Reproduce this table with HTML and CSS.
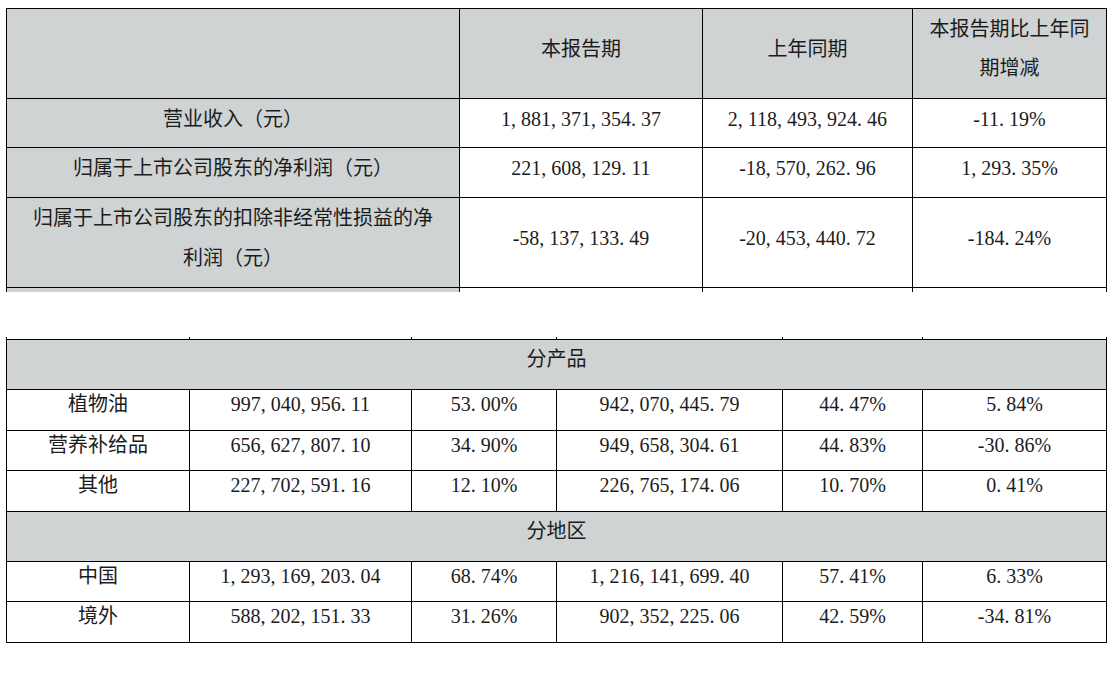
FILE: index.html
```html
<!DOCTYPE html>
<html lang="zh-CN">
<head>
<meta charset="utf-8">
<title>主要会计数据</title>
<link rel="stylesheet" href="styles.css">
</head>
<body>
<div class="page">
  <table class="kpi">
    <colgroup>
      <col class="k1"><col class="k2"><col class="k3"><col class="k4">
    </colgroup>
    <tr class="head">
      <td class="label"></td>
      <td>本报告期</td>
      <td>上年同期</td>
      <td class="narrow">本报告期比上年同期增减</td>
    </tr>
    <tr class="r49">
      <td class="label">营业收入（元）</td>
      <td>1, 881, 371, 354. 37</td>
      <td>2, 118, 493, 924. 46</td>
      <td>-11. 19%</td>
    </tr>
    <tr class="r50">
      <td class="label">归属于上市公司股东的净利润（元）</td>
      <td>221, 608, 129. 11</td>
      <td>-18, 570, 262. 96</td>
      <td>1, 293. 35%</td>
    </tr>
    <tr class="r90">
      <td class="label">归属于上市公司股东的扣除非经常性损益的净利润（元）</td>
      <td>-58, 137, 133. 49</td>
      <td>-20, 453, 440. 72</td>
      <td>-184. 24%</td>
    </tr>
    <tr class="tail">
      <td class="label"></td><td></td><td></td><td></td>
    </tr>
  </table>

  <table class="seg">
    <colgroup>
      <col class="s1"><col class="s2"><col class="s3"><col class="s4"><col class="s5"><col class="s6">
    </colgroup>
    <tr class="lead">
      <td></td><td></td><td></td><td></td><td></td><td></td>
    </tr>
    <tr class="sec first">
      <td colspan="6">分产品</td>
    </tr>
    <tr class="row">
      <td>植物油</td>
      <td>997, 040, 956. 11</td>
      <td>53. 00%</td>
      <td>942, 070, 445. 79</td>
      <td>44. 47%</td>
      <td>5. 84%</td>
    </tr>
    <tr class="row short">
      <td>营养补给品</td>
      <td>656, 627, 807. 10</td>
      <td>34. 90%</td>
      <td>949, 658, 304. 61</td>
      <td>44. 83%</td>
      <td>-30. 86%</td>
    </tr>
    <tr class="row">
      <td>其他</td>
      <td>227, 702, 591. 16</td>
      <td>12. 10%</td>
      <td>226, 765, 174. 06</td>
      <td>10. 70%</td>
      <td>0. 41%</td>
    </tr>
    <tr class="sec">
      <td colspan="6">分地区</td>
    </tr>
    <tr class="row short">
      <td>中国</td>
      <td>1, 293, 169, 203. 04</td>
      <td>68. 74%</td>
      <td>1, 216, 141, 699. 40</td>
      <td>57. 41%</td>
      <td>6. 33%</td>
    </tr>
    <tr class="row">
      <td>境外</td>
      <td>588, 202, 151. 33</td>
      <td>31. 26%</td>
      <td>902, 352, 225. 06</td>
      <td>42. 59%</td>
      <td>-34. 81%</td>
    </tr>
  </table>
</div>
</body>
</html>
```

FILE: styles.css
```css
* {
  box-sizing: border-box;
}

body {
  margin: 0;
  background: #ffffff;
  color: #1c1c1c;
  font-family: "Liberation Serif", "Noto Sans CJK SC", serif;
  font-size: 20px;
}

.page {
  padding: 8px 0 0 6px;
}

table {
  border-collapse: separate;
  border-spacing: 0;
  table-layout: fixed;
  width: 1101px;
  border-left: 1px solid #000;
}

td {
  border-right: 1px solid #000;
  border-bottom: 1px solid #000;
  text-align: center;
  vertical-align: middle;
  padding: 0 6px;
  white-space: normal;
}

/* ---------- key figures table ---------- */
.kpi {
  border-top: 1px solid #000;
}

.k1 { width: 453px; }
.k2 { width: 243px; }
.k3 { width: 210px; }
.k4 { width: 194px; }

.kpi td {
  line-height: 40px;
}

.kpi .label {
  background: #cfd3d4;
  padding: 0 20px;
}

.kpi .head td {
  background: #cfd3d4;
  padding-bottom: 9px;
  line-height: 39px;
  height: 90px;
}

.kpi .head td.narrow {
  padding-left: 12px;
  padding-right: 12px;
}

.kpi .r49 td {
  padding-bottom: 8px;
}

.kpi .r50 td {
  padding-bottom: 9px;
}

.kpi .r90 td {
  padding-bottom: 9px;
}

.kpi .tail td {
  height: 4px;
  line-height: 0;
  padding: 0;
  border-bottom: none;
}

/* ---------- segment table ---------- */
.seg {
  margin-top: 45px;
}

.s1 { width: 183px; }
.s2 { width: 222px; }
.s3 { width: 145px; }
.s4 { width: 226px; }
.s5 { width: 140px; }
.s6 { width: 184px; }

.seg td {
  line-height: 28px;
}

.seg .lead td {
  height: 2px;
  line-height: 0;
  padding: 0;
  border-bottom: none;
}

.seg .sec td {
  background: #cfd3d4;
  padding-top: 5px;
  padding-bottom: 16px;
}

.seg .sec.first td {
  border-top: 1px solid #000;
}

.seg .row td {
  padding-top: 0;
  padding-bottom: 12px;
}

.seg .row.short td {
  padding-bottom: 11px;
}
```
